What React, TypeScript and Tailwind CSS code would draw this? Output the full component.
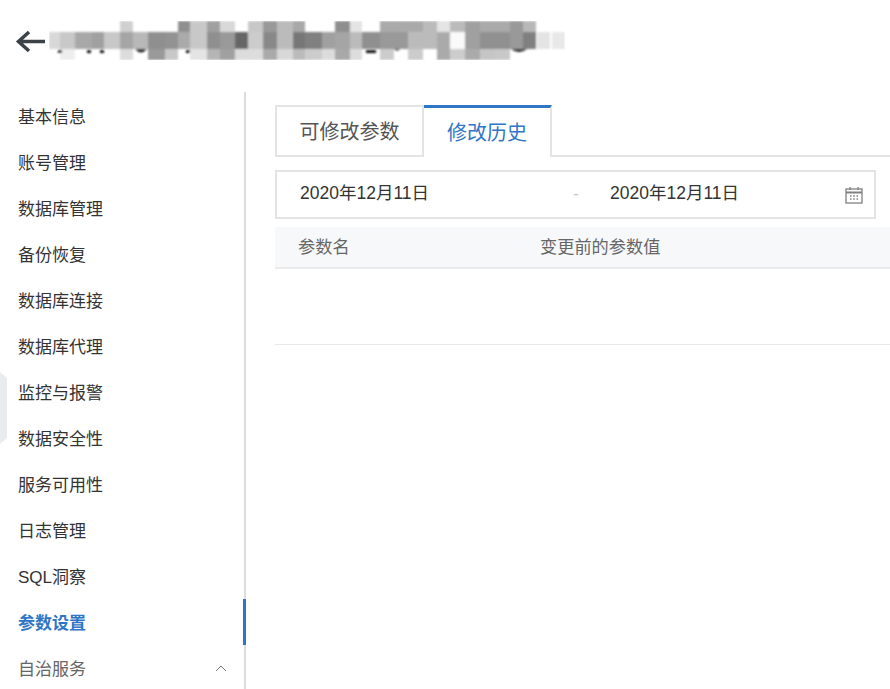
import React from 'react';

const navItems = [
  '基本信息',
  '账号管理',
  '数据库管理',
  '备份恢复',
  '数据库连接',
  '数据库代理',
  '监控与报警',
  '数据安全性',
  '服务可用性',
  '日志管理',
  'SQL洞察',
];

// [x, width, top, middle, bottom]
const mosaic: [number, number, string, string, string][] = [
  [49, 11, '', '#d8d8d8', ''],
  [60, 15, '', '#c8c8c8', '#eeeeee'],
  [75, 17, '', '#a8a8a8', ''],
  [92, 12, '', '#a0a0a0', ''],
  [104, 16, '', '#c8c8c8', ''],
  [120, 13, '#d0d0d0', '#a5a5a5', '#dcdcdc'],
  [133, 15, '', '#b8b8b8', ''],
  [148, 17, '', '#8f8f8f', '#999999'],
  [165, 13, '', '#929292', '#c8c8c8'],
  [178, 12, '#8f8f8f', '#aaaaaa', ''],
  [190, 17, '#c8c8c8', '#c8c8c8', '#e4e4e4'],
  [207, 13, '#a0a0a0', '#8f8f8f', '#b5b5b5'],
  [220, 15, '#d8d8d8', '#999999', '#a0a0a0'],
  [235, 13, '', '#666666', '#dcdcdc'],
  [248, 15, '#c8c8c8', '#cccccc', '#dddddd'],
  [263, 14, '#999999', '#888888', '#aaaaaa'],
  [277, 16, '#bbbbbb', '#bbbbbb', '#d8d8d8'],
  [293, 12, '#a8a8a8', '#777777', '#bbbbbb'],
  [305, 17, '', '#808080', '#cccccc'],
  [322, 13, '', '#a0a0a0', '#dcdcdc'],
  [335, 15, '#8f8f8f', '#a5a5a5', '#a8a8a8'],
  [350, 12, '#e4e4e4', '#bbbbbb', '#dddddd'],
  [362, 18, '', '#8f8f8f', ''],
  [380, 14, '#aaaaaa', '#999999', '#cccccc'],
  [394, 14, '#aaaaaa', '#999999', ''],
  [408, 15, '#aaaaaa', '#bbbbbb', '#cccccc'],
  [423, 14, '#bbbbbb', '#bbbbbb', ''],
  [437, 13, '#e4e4e4', '#aaaaaa', '#aaaaaa'],
  [450, 15, '#bbbbbb', '#fafafa', '#cccccc'],
  [465, 15, '#a0a0a0', '#a0a0a0', '#aaaaaa'],
  [480, 15, '#aaaaaa', '#909090', '#c5c5c5'],
  [495, 15, '#aaaaaa', '#909090', '#c8c8c8'],
  [510, 13, '#999999', '#999999', ''],
  [523, 13, '#b8b8b8', '#808080', ''],
  [537, 13, '', '#e4e4e4', ''],
  [552, 13, '', '#e8e8e8', ''],
];

function BlurredTitle() {
  return (
    <svg width="600" height="92" viewBox="0 0 600 92" className="shrink-0">
      <path d="M45 41.5H19M29 32L18.5 41.5L29 51" fill="none" stroke="#3a4147" strokeWidth="3.5" />
      <g filter="url(#soft)">
        {mosaic.map(([x, w, top, mid, bottom]) => (
          <g key={x}>
            {top && <rect x={x} y="21" width={w} height="11" fill={top} />}
            <rect x={x} y="32" width={w} height="17" fill={mid} />
            {bottom && <rect x={x} y="49" width={w} height="11" fill={bottom} />}
          </g>
        ))}
        <rect x="58" y="50" width="4" height="3" fill="#111" />
        <rect x="87" y="50" width="4" height="3" fill="#111" />
        <rect x="100" y="50" width="4" height="3" fill="#111" />
        <rect x="186" y="50" width="4" height="3" fill="#111" />
        <rect x="366" y="50" width="10" height="3" fill="#111" />
        <path d="M135 49H147Q141 56 135 49ZM394 49H400Q397 52 394 49ZM511 49H527Q519 55 511 49Z" fill="#222" />
      </g>
      <defs>
        <filter id="soft" x="0" y="0" width="100%" height="100%">
          <feGaussianBlur stdDeviation="0.9" />
        </filter>
      </defs>
    </svg>
  );
}

function CalendarIcon() {
  return (
    <svg width="18" height="18" viewBox="0 0 18 18" fill="none" stroke="#808080" strokeWidth="1.3">
      <rect x="1" y="3" width="16" height="14" />
      <path d="M1 6.5H17" strokeWidth="2" />
      <path d="M5 1V4M13 1V4" />
      <path d="M5 10H6.5M8.2 10H9.8M11.5 10H13M5 13H6.5M8.2 13H9.8M11.5 13H13" strokeWidth="1.6" />
    </svg>
  );
}

export default function App() {
  return (
    <div className="relative w-[890px] h-[689px] overflow-hidden bg-white font-['Liberation_Sans','Noto_Sans_CJK_SC',sans-serif] text-[#333]">
      <div className="h-[92px] flex">
        <BlurredTitle />
      </div>

      <div className="flex h-[597px]">
        <aside className="relative w-[246px] shrink-0 border-r-2 border-[#dcdcdc] pt-px text-[17px]">
          {navItems.map(item => (
            <div key={item} className="h-[46px] pl-[18px] flex items-center">
              <span className="pt-1">{item}</span>
            </div>
          ))}
          <div className="h-[46px] pl-[18px] flex items-center font-bold text-[#2f76c6] border-r-[3px] border-[#2f76c6] -mr-[2px]">
            <span className="pt-1">参数设置</span>
          </div>
          <div className="h-[46px] pl-[18px] pr-[17px] flex items-center justify-between text-[#666]">
            <span className="pt-1">自治服务</span>
            <svg width="12" height="8" viewBox="0 0 12 8" fill="none" stroke="#777" strokeWidth="1">
              <path d="M1 7L6 2L11 7" />
            </svg>
          </div>
        </aside>

        <main className="flex-1 min-w-0 pl-[29px] pt-[13px]">
          <div className="flex h-[52px] text-[20px]">
            <div className="w-[149px] border-2 border-[#e4e4e4] flex items-center justify-center text-[#555]">
              <span className="pt-0.5">可修改参数</span>
            </div>
            <div className="w-[128px] border-t-[3px] border-t-[#2f76c6] border-r-2 border-r-[#e4e4e4] flex items-center justify-center text-[#2f76c6]">
              修改历史
            </div>
            <div className="flex-1 border-b-2 border-[#e4e4e4]"></div>
          </div>

          <div className="mt-[13px] mr-[14px] h-[49px] border-2 border-[#e4e4e4] flex items-center pl-[23px] pr-[11px] text-[17.5px]">
            <span className="w-[273px] pb-0.5">2020年12月11日</span>
            <span className="w-[37px] text-[#ccc]">-</span>
            <span className="flex-1 pb-0.5">2020年12月11日</span>
            <CalendarIcon />
          </div>

          <div className="mt-[8px] h-[42px] bg-[#f7f8fa] border-b-2 border-[#ebebeb] flex items-center pl-[23px] text-[17.2px] text-[#666]">
            <span className="w-[242px] pt-0.5">参数名</span>
            <span className="pt-0.5">变更前的参数值</span>
          </div>
          <div className="h-[76px] border-b border-[#e8e8e8]"></div>
        </main>
      </div>

      {/* tab of the collapsed panel, lies over the sidebar */}
      <div className="absolute left-0 top-[372px] w-[7px] h-[72px] bg-[#e9ebee] [clip-path:polygon(0_0,100%_6px,100%_66px,0_100%)]"></div>
    </div>
  );
}
